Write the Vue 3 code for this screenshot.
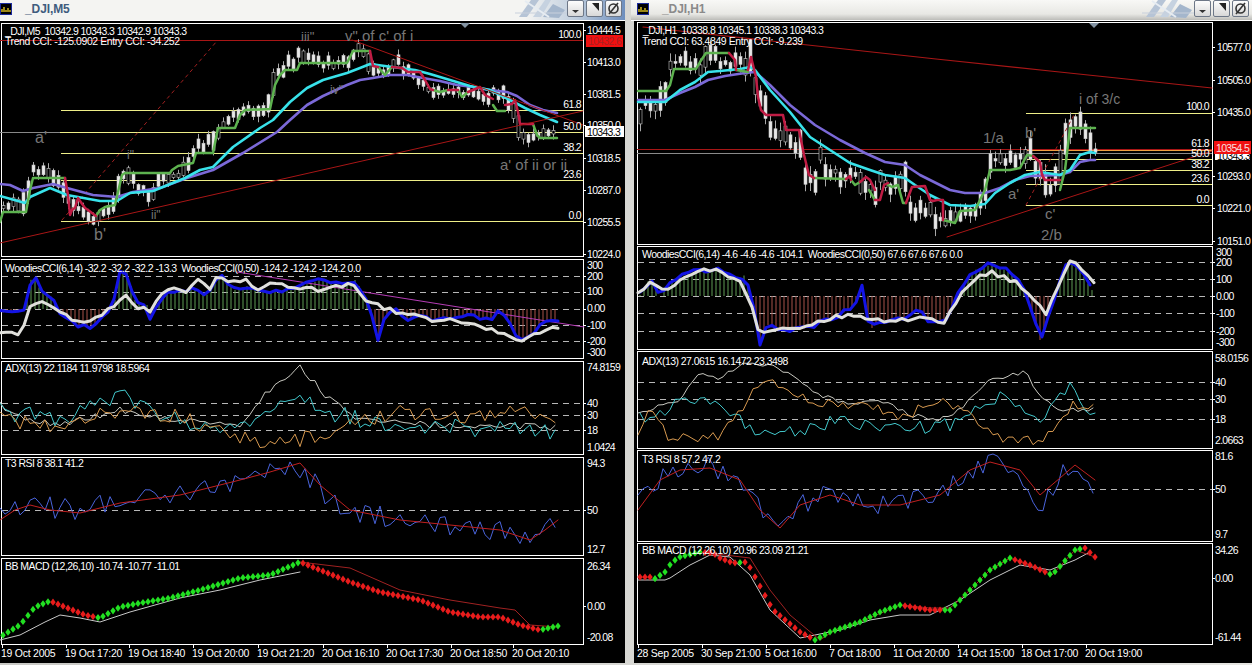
<script setup>
const pts = s => s.trim().split(/\s+/).map(q => q.split(',').map(Number))
const str = a => a.map(q => q[0].toFixed(1) + ',' + q[1].toFixed(1)).join(' ')
const rng = seed => () => { seed = (seed * 16807) % 2147483647; return seed / 2147483647 }
const at = (a, x) => {
  if (x <= a[0][0]) return a[0][1]
  for (let i = 1; i < a.length; i++) {
    if (x <= a[i][0]) {
      const t = (x - a[i - 1][0]) / (a[i][0] - a[i - 1][0])
      return a[i - 1][1] + (a[i][1] - a[i - 1][1]) * t
    }
  }
  return a[a.length - 1][1]
}
const noisy = (s, step, amp, seed) => {
  const a = pts(s), r = rng(seed), out = []
  for (let x = a[0][0]; x <= a[a.length - 1][0]; x += step) {
    out.push([x, at(a, x) + (r() - 0.5) * amp * 2])
  }
  return str(out)
}
const candles = (s, x0, x1, step, amp, seed) => {
  const a = pts(s), r = rng(seed), out = []
  for (let x = x0; x <= x1; x += step) {
    const c = at(a, x)
    const d = Math.abs(at(a, x + step) - c)
    const h = 2 + r() * amp + d * 0.9
    const top = c - h * r()
    out.push({ x, top, h, hi: top - 1 - r() * amp * 0.7, lo: top + h + 1 + r() * amp * 0.7, hollow: r() > 0.78 })
  }
  return out
}
const histo = (s, base, x0, x1, step) => {
  const a = pts(s), out = []
  for (let x = x0; x <= x1; x += step) {
    const y = at(a, x)
    out.push({ x, y, base, c: y < base ? '#5f9c55' : '#a8524a' })
  }
  return out
}
const diamonds = (s, x0, x1, step) => {
  const a = pts(s)
  let g = '', r = ''
  for (let x = x0; x <= x1; x += step) {
    const y = at(a, x)
    const up = at(a, x + 7) < at(a, x - 5)
    const d = `M${x - 2.7} ${y}L${x} ${y - 3.6}L${x + 2.7} ${y}L${x} ${y + 3.6}Z`
    if (up) g += d; else r += d
  }
  return [{ d: g, c: '#22e022' }, { d: r, c: '#e81c1c' }]
}
const G = '#5db24f', R = '#c01c44', C = '#38e2ea', P = '#7b69d8', TR = '#a81616'
const yl = '#eeee88'
const text = (x, y, t, cls = 'lab', anchor = 'start') => ({ x, y, t, cls, anchor })
const ax = (x, list) => list.map(([t, y]) => text(x, y + 4, t, 'lab'))
const ticks = (x, list) => list.map(y => ({ x, y }))

const L = {
  price: '0,208 15,206 20,210 33,170 40,172 50,175 60,190 70,205 80,212 90,216 95,218 110,205 118,190 125,170 135,185 150,195 155,197 160,178 170,176 185,172 193,153 200,145 213,141 220,125 240,112 260,108 272,100 275,78 280,72 297,56 300,50 320,65 340,63 350,60 358,50 365,53 370,55 375,70 385,72 395,62 400,65 410,75 420,85 435,90 445,92 455,90 470,95 485,98 495,90 510,105 518,120 520,135 525,140 530,138 535,135 545,133 555,133',
  green: ['0,222 3,212 26,212 30,190 33,178 65,178', '96,216 100,210 105,207 115,205 122,175 125,173 170,173 172,170 178,166 193,163 196,153 213,153 218,128 235,128 240,115 245,110 270,109 275,85 280,75 285,70 297,70 300,63 347,63 353,51 370,51', '378,67 385,75 392,67', '433,90 440,92 448,90', '458,90 462,97 468,92', '493,105 497,111 505,111', '533,124 537,135 540,138 557,138'],
  red: ['65,178 68,195 70,215 72,210 75,208 78,198 85,208 88,210 96,216', '370,51 373,66 378,67', '392,67 402,68 408,72 420,72 425,80 430,89 433,90', '448,90 458,90', '468,92 480,87 485,95 493,99', '505,105 512,104 515,100 518,112 520,124 533,124'],
  cyan: '0,196 25,203 30,197 50,188 67,195 100,201 117,201 130,193 153,191 185,178 200,170 213,167 233,147 260,128 273,120 290,102 307,88 323,80 347,73 360,68 370,64 385,66 400,68 415,70 430,74 450,80 470,86 490,90 510,100 525,108 540,115 557,122',
  purple: '0,184 10,185 23,191 33,188 53,184 67,188 93,195 117,197 133,192 160,188 187,178 213,170 243,153 277,132 290,120 307,105 323,96 347,85 360,80 373,78 390,75 407,75 423,78 440,81 457,85 473,87 490,90 507,92 517,96 530,105 543,110 557,113',
  cciB: '0,313 25,310 28,290 33,273 40,290 50,295 60,312 70,320 80,326 95,326 105,315 115,300 120,272 127,272 135,300 147,305 150,318 155,310 165,295 180,290 195,290 208,295 220,275 235,290 250,285 265,292 285,290 305,285 320,280 340,285 355,280 365,295 372,318 378,339 385,318 395,310 405,320 420,315 435,320 450,320 470,315 490,320 500,310 512,325 520,343 530,335 540,325 548,320 558,320',
  cciW: '0,335 10,330 18,333 25,325 32,302 40,303 50,305 55,308 65,315 72,321 85,322 95,320 105,310 115,305 125,295 135,307 150,310 160,295 175,288 185,292 197,280 210,290 218,276 235,283 245,280 260,290 270,285 285,285 300,288 320,290 330,288 350,283 365,300 375,305 390,310 410,315 430,320 450,320 470,325 490,328 505,335 520,343 535,332 548,330 558,328',
  macd: '0,637 20,625 35,607 50,601 65,607 85,615 100,618 120,607 140,603 170,598 200,590 240,578 270,575 300,562 320,570 350,582 380,592 420,600 450,612 480,617 500,617 520,625 540,630 558,626'
}
const Rr = {
  price: '640,110 645,105 655,107 660,105 669,70 675,62 685,62 695,65 705,65 708,50 720,63 730,65 740,63 750,55 754,86 760,100 765,112 770,125 775,135 785,135 790,140 795,150 800,155 806,177 815,178 820,160 825,165 830,172 840,173 850,178 860,175 866,187 875,190 880,178 890,187 900,185 905,180 911,207 925,213 935,215 943,223 950,217 955,213 965,213 975,205 985,190 990,170 995,160 1005,160 1010,155 1020,155 1028,153 1035,170 1040,165 1045,178 1050,190 1055,185 1060,175 1065,150 1070,125 1075,118 1080,120 1085,130 1090,140 1095,150',
  green: ['638,91 666,91 670,85 674,69 696,69 700,62 706,53 729,53', '736,70 748,72', '814,178 846,179', '851,180 855,185 860,182', '869,190 875,200', '888,185 892,187 898,185 903,203 906,203', '943,220 955,223 960,211 975,210 985,190 990,170 1010,170 1020,168 1027,155 1033,156', '1060,190 1065,170 1070,128 1095,128'],
  red: ['729,53 735,60 736,70', '748,70 751,57 756,77 758,97 761,110 766,115 783,115 786,130 799,130 804,155 809,175 814,178', '846,179 850,176 851,180', '860,182 866,177 870,180 875,190', '875,200 880,200 884,185 888,183', '906,203 912,187 925,186 930,200 933,201 937,200 943,200 943,220', '1033,156 1040,162 1042,175 1045,180 1060,180'],
  cyan: '638,102 665,102 680,90 695,82 708,72 720,71 740,69 750,67 755,70 770,90 790,112 810,137 830,150 850,163 870,170 885,175 905,178 915,185 930,195 950,205 970,206 985,204 995,193 1010,183 1025,175 1040,172 1060,175 1070,170 1080,155 1090,152 1095,153',
  purple: '638,100 665,100 680,93 695,87 708,80 725,76 745,73 755,72 770,85 790,105 815,125 840,140 865,153 885,162 905,165 920,175 930,180 950,190 965,193 985,193 1000,188 1015,180 1030,176 1060,175 1070,172 1080,162 1090,160 1095,160',
  cciB: '640,295 650,278 660,296 672,280 700,270 720,270 735,280 745,275 752,300 760,345 768,325 780,330 800,330 815,325 840,315 855,305 862,285 870,330 880,320 900,320 915,310 930,320 945,320 960,290 975,270 990,265 1005,270 1020,280 1030,305 1040,340 1050,310 1065,265 1075,262 1095,295',
  cciW: '638,295 650,283 665,290 680,280 700,268 720,272 740,280 750,300 760,335 775,328 790,330 810,325 830,318 855,315 880,320 900,320 920,318 945,322 960,295 975,278 990,272 1005,278 1020,285 1035,300 1045,315 1055,295 1070,262 1085,270 1095,285',
  macd: '640,577 650,577 653,580 665,572 672,562 680,557 700,552 713,553 720,558 733,563 747,562 753,573 762,590 773,610 800,632 815,640 830,632 860,622 880,612 900,605 930,610 950,610 970,590 990,570 1010,558 1030,565 1052,575 1075,550 1085,548 1095,557'
}

const wave = (x, y, t, size = 15) => ({ x, y, t, size })

const buildMain = (d, cfg) => ({
  ...cfg,
  candles: candles(d.price, cfg.cx0, cfg.cx1, cfg.cstep, cfg.camp, cfg.seed),
  lines: [
    ...cfg.under,
    { p: str(pts(d.purple)), c: P, w: 2.6 },
    { p: str(pts(d.cyan)), c: C, w: 2.6 },
    ...d.green.map(p => ({ p, c: G, w: 2.5 })),
    ...d.red.map(p => ({ p, c: R, w: 2.5 })),
    ...cfg.over
  ]
})

const left = {
  cls: 'active', x: 0, w: 625, name: '_DJI,M5',
  panes: [
    buildMain(L, {
      top: 21, h: 237, f: [1, 23, 583, 256], cx0: 3, cx1: 556, cstep: 5, camp: 7, seed: 4711,
      hl: [[0, 583, 40, TR], [61, 583, 110, yl], [0, 60, 132, '#888'], [60, 583, 132, yl], [61, 583, 153, yl], [61, 583, 180, yl], [61, 583, 221, yl]],
      under: [{ p: '62,220 217,41', c: '#a02020', w: 1, dash: '3 4' }],
      over: [{ p: '0,243 583,111', c: TR, w: 1 }, { p: '352,40 583,125', c: TR, w: 1 }],
      waves: [wave(301, 41, 'iii"', 13), wave(345, 41, 'v" of c\' of i'), wave(330, 94, 'iv"', 12), wave(127, 159, 'i"', 12), wave(35, 143, "a'", 16), wave(94, 240, "b'", 16), wave(151, 219, 'ii"', 12), wave(500, 170, "a' of ii or ii")],
      labs: [text(5, 35, '_DJI,M5  10342.9 10343.3 10342.9 10343.3', 'head quote'), text(5, 45, 'Trend CCI: -125.0902 Entry CCI: -34.252', 'head trend'),
        text(581, 38, '100.0', 'lab', 'end'), text(581, 108, '61.8', 'lab', 'end'), text(581, 130, '50.0', 'lab', 'end'), text(581, 151, '38.2', 'lab', 'end'), text(581, 178, '23.6', 'lab', 'end'), text(581, 219, '0.0', 'lab', 'end'),
        ...ax(587, [['10444.5', 30], ['10413.0', 62], ['10381.5', 94], ['10350.0', 125], ['10318.5', 158], ['10287.0', 190], ['10255.5', 222], ['10224.0', 254]])],
      tk: ticks(583, [30, 62, 94, 125, 158, 190, 222, 254]),
      tags: [{ x: 586, y: 35, w: 37, h: 12, fill: '#f01010', t: '10432.6', c: '#a82020' }, { x: 585, y: 126, w: 39, h: 11, fill: '#fff', t: '10343.3', c: '#000' }],
      tri: 465
    }),
    {
      top: 258, h: 102, f: [1, 259, 583, 358], dash: [276, 292, 309, 325, 341], bars: histo(L.cciB, 309, 3, 556, 4),
      lines: [{ p: '237,272 320,285 584,327', c: '#b63cb6', w: 1 }, { p: noisy(L.cciB, 6, 2.5, 808), c: '#1414e6', w: 3 }, { p: noisy(L.cciW, 6, 2.2, 909), c: '#e0e0dc', w: 3 }],
      labs: [text(5, 272, 'WoodiesCCI(6,14) -32.2 -32.2 -32.2 -13.3  WoodiesCCI(0,50) -124.2 -124.2 -124.2 0.0', 'head'),
        ...ax(587, [['300', 265], ['200', 276], ['100', 291], ['0.00', 308], ['-100', 325], ['-200', 341], ['-300', 352]])],
      tk: ticks(583, [276, 292, 309, 325, 341])
    },
    {
      top: 360, h: 96, f: [1, 361, 583, 454], dash: [403, 415, 430],
      lines: [
        { p: noisy('0,405 30,420 60,425 120,410 180,420 240,425 265,395 300,366 325,395 360,420 430,425 500,425 558,428', 5, 3, 91), c: '#c8c8c0', w: 1 },
        { p: noisy('0,412 60,418 125,395 170,420 230,425 270,415 290,392 320,410 380,425 450,428 510,430 558,432', 5, 9, 1234), c: '#42c8cc', w: 1 },
        { p: noisy('0,420 60,425 100,410 170,415 220,430 270,447 300,440 340,430 400,410 450,420 520,410 558,425', 5, 8, 777), c: '#d89a50', w: 1 }
      ],
      labs: [text(5, 372, 'ADX(13) 22.1184 11.9798 18.5964', 'head'),
        ...ax(587, [['74.8159', 367], ['40', 403], ['30', 415], ['18', 430], ['1.0424', 447]])],
      tk: ticks(583, [403, 415, 430])
    },
    {
      top: 456, h: 101, f: [1, 457, 583, 555], dash: [510],
      lines: [
        { p: noisy('0,518 30,505 80,510 120,500 180,495 240,480 270,470 295,462 320,490 350,510 400,520 450,525 500,530 530,545 558,520', 5, 11, 5150), c: '#4a64dc', w: 1 },
        { p: '0,520 15,510 30,505 50,510 80,513 120,503 180,495 240,480 270,472 300,463 320,485 350,510 400,520 450,525 500,530 530,540 545,530 558,520', c: '#c02020', w: 1 }
      ],
      labs: [text(5, 467, 'T3 RSI 8 38.1 41.2', 'head'), ...ax(587, [['94.3', 463], ['50', 510], ['12.7', 549]])],
      tk: ticks(583, [510])
    },
    {
      top: 557, h: 88, f: [1, 558, 583, 644],
      lines: [
        { p: '0,640 20,635 45,622 60,615 80,618 100,622 130,612 180,598 220,590 260,580 300,572', c: '#c8c8c8', w: 1 },
        { p: '300,562 350,568 400,590 450,600 500,608 515,610 530,625 558,627', c: '#a02222', w: 1 }
      ],
      marks: diamonds(L.macd, 3, 558, 5),
      labs: [text(5, 570, 'BB MACD (12,26,10) -10.74 -10.77 -11.01', 'head'), ...ax(587, [['26.34', 566], ['0.00', 606], ['-20.08', 637]])],
      tk: ticks(583, [606])
    }
  ],
  time: [['19 Oct 2005', 1], ['19 Oct 17:20', 65], ['19 Oct 18:40', 128], ['19 Oct 20:00', 192], ['19 Oct 21:20', 257], ['20 Oct 16:10', 322], ['20 Oct 17:30', 386], ['20 Oct 18:50', 450], ['20 Oct 20:10', 512]]
}

const right = {
  cls: 'idle', x: 634, w: 618, name: '_DJI,H1',
  panes: [
    buildMain(Rr, {
      top: 21, h: 224, f: [637, 22, 1212, 244], cx0: 640, cx1: 1095, cstep: 5, camp: 11, seed: 90210,
      hl: [[637, 1212, 153, '#8a8a8a'], [637, 1212, 149, TR], [1026, 1212, 113, yl], [1026, 1212, 150, '#f0a040'], [1026, 1212, 159, yl], [1026, 1212, 170, yl], [1026, 1212, 184, yl], [1026, 1212, 205, yl]],
      under: [{ p: '1026,205 1075,113', c: '#a02020', w: 1, dash: '3 4' }],
      over: [{ p: '643,27 936,59 1050,71 1212,88', c: TR, w: 1.2 }, { p: '947,237 1212,151', c: TR, w: 1 }],
      waves: [wave(1079, 104, 'i of 3/c', 14), wave(983, 143, '1/a'), wave(1025, 138, "b'"), wave(1008, 199, "a'"), wave(1045, 219, "c'"), wave(1041, 240, '2/b')],
      labs: [text(643, 34, '_DJI,H1  10338.8 10345.1 10338.3 10343.3', 'head quote'), text(642, 45, 'Trend CCI: 63.4849 Entry CCI: -9.239', 'head trend'),
        text(1209, 110, '100.0', 'lab', 'end'), text(1209, 147, '61.8', 'lab', 'end'), text(1209, 157, '50.0', 'lab', 'end'), text(1209, 168, '38.2', 'lab', 'end'), text(1209, 182, '23.6', 'lab', 'end'), text(1209, 203, '0.0', 'lab', 'end'),
        ...ax(1217, [['10577.0', 47], ['10505.0', 80], ['10435.0', 112], ['10293.0', 176], ['10221.0', 208], ['10151.0', 241]])],
      tk: ticks(1212, [47, 80, 112, 176, 208, 241]),
      tags: [{ x: 1215, y: 151, w: 35, h: 9, fill: '#fff', t: '10343.3', c: '#000' }, { x: 1214, y: 141, w: 37, h: 13, fill: '#f01010', t: '10354.5', c: '#f8e0e0' }],
      tri: 1094
    }),
    {
      top: 245, h: 105, f: [637, 246, 1212, 349], dash: [262, 279, 296, 313, 331], bars: histo(Rr.cciB, 296, 640, 1095, 4),
      lines: [{ p: noisy(Rr.cciB, 6, 3, 121), c: '#1414e6', w: 3 }, { p: noisy(Rr.cciW, 6, 2.2, 232), c: '#e0e0dc', w: 3 }],
      labs: [text(642, 258, 'WoodiesCCI(6,14) -4.6 -4.6 -4.6 -104.1  WoodiesCCI(0,50) 67.6 67.6 67.6 0.0', 'head'),
        ...ax(1216, [['300', 252], ['200', 262], ['100', 279], ['0.00', 296], ['-100', 313], ['-200', 331], ['-300', 342]])],
      tk: ticks(1212, [262, 279, 296, 313, 331])
    },
    {
      top: 350, h: 99, f: [637, 351, 1212, 448], dash: [382, 399, 419],
      lines: [
        { p: noisy('638,415 660,405 680,400 700,372 720,378 745,362 770,365 790,375 820,395 850,405 880,400 910,415 940,420 960,410 990,380 1025,372 1040,395 1060,410 1095,410', 5, 2, 222), c: '#c8c8c0', w: 1 },
        { p: noisy('640,420 700,395 720,405 750,430 800,432 840,420 900,430 950,425 1000,395 1040,420 1072,385 1095,420', 5, 7, 333), c: '#42c8cc', w: 1 },
        { p: noisy('638,440 650,405 670,440 720,435 748,400 765,375 790,395 830,405 870,405 900,420 935,400 970,415 1000,440 1045,440 1072,405 1095,410', 5, 5, 444), c: '#d89a50', w: 1 }
      ],
      labs: [text(642, 365, 'ADX(13) 27.0615 16.1472 23.3498', 'head'),
        ...ax(1215, [['58.0156', 358], ['40', 382], ['30', 399], ['18', 419], ['2.0663', 440]])],
      tk: ticks(1212, [382, 399, 419])
    },
    {
      top: 449, h: 93, f: [637, 450, 1212, 541], dash: [489],
      lines: [
        { p: noisy('638,505 660,480 680,468 710,466 740,480 760,510 780,528 800,505 830,495 860,505 900,505 940,495 970,470 990,460 1020,475 1040,505 1060,478 1075,462 1095,490', 5, 11, 6006), c: '#4a64dc', w: 1 },
        { p: '638,510 660,480 680,470 710,468 740,480 760,510 780,528 800,505 830,495 860,505 900,505 940,495 970,470 990,462 1020,470 1040,495 1060,478 1075,465 1095,480', c: '#c02020', w: 1 }
      ],
      labs: [text(642, 463, 'T3 RSI 8 57.2 47.2', 'head'), ...ax(1215, [['81.6', 456], ['50', 489], ['9.7', 534]])],
      tk: ticks(1212, [489])
    },
    {
      top: 542, h: 103, f: [637, 543, 1212, 644],
      lines: [
        { p: '638,580 665,580 670,578 690,565 710,555 730,557 750,575 770,610 800,638 840,630 870,620 900,615 930,615 960,600 990,580 1020,565 1050,570 1075,560 1090,552', c: '#c8c8c8', w: 1 },
        { p: '700,552 750,558 770,590 790,615 820,640 835,630 860,622 900,605 930,608 950,608 970,590 990,570 1010,558 1030,565 1052,575 1075,550 1095,557', c: '#a02222', w: 1 }
      ],
      marks: diamonds(Rr.macd, 640, 1095, 5),
      labs: [text(642, 554, 'BB MACD (12,26,10) 20.96 23.09 21.21', 'head'), ...ax(1215, [['34.26', 550], ['0.00', 578], ['-61.44', 637]])],
      tk: ticks(1212, [578])
    }
  ],
  time: [['28 Sep 2005', 637], ['30 Sep 21:00', 701], ['5 Oct 16:00', 765], ['7 Oct 18:00', 829], ['11 Oct 20:00', 893], ['14 Oct 15:00', 957], ['18 Oct 17:00', 1021], ['20 Oct 19:00', 1085]]
}
const windows = [left, right]
</script>

<template>
  <main class="screen">
    <section v-for="w in windows" :key="w.name" class="win" :class="w.cls">
      <header class="title">
        <svg class="ico" viewBox="0 0 12 12">
          <rect x="0.5" y="0.5" width="11" height="11" fill="#000" stroke="#1b2a9c" />
          <path d="M2 9V6M4 9V4M6 9V7M8 9V5M10 9V7" stroke="#f0d020" stroke-width="1.3" />
        </svg>
        <span class="name">{{ w.name }}</span>
        <svg class="mark" viewBox="0 0 52 18">
          <path d="M4 17L16 0H24L12 17Z" fill="#b6c4d6" />
          <path d="M18 17L30 0H36L26 17Z" fill="#c6d2e0" />
          <path d="M28 17L38 4L50 10L44 18Z" fill="#a4b6cc" />
          <path d="M0 13H52" stroke="#c8d0dc" />
          <path d="M10 1L34 17" stroke="#e6ecf2" stroke-width="2" />
        </svg>
        <div class="btns">
          <span class="btn"><svg viewBox="0 0 15 15"><path d="M4 9H11L7.5 12Z" fill="#333" /></svg></span>
          <span class="btn"><svg viewBox="0 0 15 15"><path d="M5 2H12V10Z" fill="#222" /></svg></span>
          <span class="btn"><svg viewBox="0 0 15 15"><circle cx="7.5" cy="7.5" r="4.5" fill="none" stroke="#333" stroke-width="1.6" /><path d="M3 13L12 2" stroke="#333" stroke-width="1.6" /></svg></span>
        </div>
      </header>
      <div class="chart">
        <svg v-for="p in w.panes" :key="p.top" class="pane" :viewBox="`${w.x} ${p.top} ${w.w} ${p.h}`" :style="{ height: p.h + 'px' }">
          <rect :x="p.f[0]" :y="p.f[1]" :width="p.f[2] - p.f[0]" :height="p.f[3] - p.f[1]" fill="none" stroke="#fff" shape-rendering="crispEdges" />
          <line v-for="y in p.dash" :key="'d' + y" :x1="p.f[0] + 1" :x2="p.f[2]" :y1="y + 0.5" :y2="y + 0.5" stroke="#b8b8b8" stroke-dasharray="6 5" shape-rendering="crispEdges" />
          <line v-for="b in p.bars" :key="'b' + b.x" :x1="b.x" :x2="b.x" :y1="b.base" :y2="b.y" :stroke="b.c" />
          <line v-for="(l, i) in p.hl" :key="'h' + i" :x1="l[0]" :x2="l[1]" :y1="l[2] + 0.5" :y2="l[2] + 0.5" :stroke="l[3]" shape-rendering="crispEdges" />
          <g v-for="c in p.candles" :key="'c' + c.x">
            <line :x1="c.x + 0.5" :x2="c.x + 0.5" :y1="c.hi" :y2="c.lo" stroke="#a8a8a8" />
            <rect :x="c.x - 1" :y="c.top" width="3" :height="c.h" :fill="c.hollow ? '#000' : '#e8e8e8'" stroke="#c8c8c8" stroke-width="0.6" />
          </g>
          <polyline v-for="(l, i) in p.lines" :key="'l' + i" :points="l.p" fill="none" :stroke="l.c" :stroke-width="l.w" :stroke-dasharray="l.dash" stroke-linejoin="round" stroke-linecap="round" />
          <path v-for="m in p.marks" :key="m.c" :d="m.d" :fill="m.c" />
          <line v-for="t in p.tk" :key="'t' + t.y" :x1="t.x" :x2="t.x + 3" :y1="t.y + 0.5" :y2="t.y + 0.5" stroke="#fff" shape-rendering="crispEdges" />
          <path v-if="p.tri" :d="`M${p.tri - 5} 23H${p.tri + 5}L${p.tri} 28Z`" fill="#8494a4" />
          <text v-for="(v, i) in p.waves" :key="'w' + i" :x="v.x" :y="v.y" class="wave" :font-size="v.size">{{ v.t }}</text>
          <text v-for="(t, i) in p.labs" :key="'x' + i" :x="t.x" :y="t.y" :class="t.cls" :text-anchor="t.anchor">{{ t.t }}</text>
          <g v-for="t in p.tags" :key="t.t">
            <rect :x="t.x" :y="t.y" :width="t.w" :height="t.h" :fill="t.fill" />
            <text :x="t.x + 2" :y="t.y + t.h / 2 + 4" class="lab" :style="{ fill: t.c }">{{ t.t }}</text>
          </g>
        </svg>
        <svg class="pane" :viewBox="`${w.x} 645 ${w.w} 18`" style="height: 18px">
          <g v-for="t in w.time" :key="t[0]">
            <line :x1="t[1] + 1.5" :x2="t[1] + 1.5" y1="645" y2="648" stroke="#fff" />
            <text :x="t[1]" y="657" class="lab time">{{ t[0] }}</text>
          </g>
        </svg>
      </div>
    </section>
  </main>
</template>

<style scoped>
.screen {
  display: flex;
  justify-content: space-between;
  width: 1252px;
  height: 665px;
  background: linear-gradient(90deg, #c9c9c5, #e6e6e2);
  overflow: hidden;
}
.win {
  display: flex;
  flex-direction: column;
}
.win.active { width: 625px; }
.win.idle { width: 618px; }
.title {
  display: flex;
  align-items: center;
  height: 21px;
  padding-bottom: 3px;
  box-sizing: border-box;
  background: linear-gradient(#f8f8f6, #e8e8e4 70%, #bcbcb8);
  border-bottom: 1px solid #fff;
}
.active .title { background: linear-gradient(90deg, #f4f4f2 0, #f4f4f2 84%, #c0cede 92%, #6e8fbe 100%); }
.idle .title { margin-left: -3px; }
.ico { width: 12px; height: 12px; flex: none; margin-left: 0; }
.idle .ico { margin-left: 6px; }
.name {
  margin-left: 13px;
  font: bold 12px "Liberation Sans", sans-serif;
  color: #3f5c7e;
  letter-spacing: -0.1px;
}
.idle .name { color: #8a8a8a; }
.mark { width: 52px; height: 18px; margin-left: auto; flex: none; }
.btns { display: flex; gap: 2px; margin: 0 3px 0 0; }
.btn {
  display: block;
  width: 15px;
  height: 15px;
  border: 1px solid #6d7787;
  border-radius: 2px;
  background: linear-gradient(#fdfdfd, #d8d8d8);
}
.btn svg { display: block; width: 15px; height: 15px; }
.chart {
  display: flex;
  flex-direction: column;
  background: #000;
}
.pane { display: block; width: 100%; overflow: visible; }
.lab, .head {
  font: 10.5px "Liberation Sans", sans-serif;
  fill: #fff;
  white-space: pre;
}
.lab { letter-spacing: -0.7px; }
.lab.time { letter-spacing: -0.25px; }
.head { letter-spacing: -0.55px; }
.head.trend { letter-spacing: -0.42px; }
.head.quote { letter-spacing: -0.6px; }
.wave {
  font-family: "Liberation Sans", sans-serif;
  fill: #777;
  white-space: pre;
}
</style>

<style>
html, body { margin: 0; background: #000; }
</style>
